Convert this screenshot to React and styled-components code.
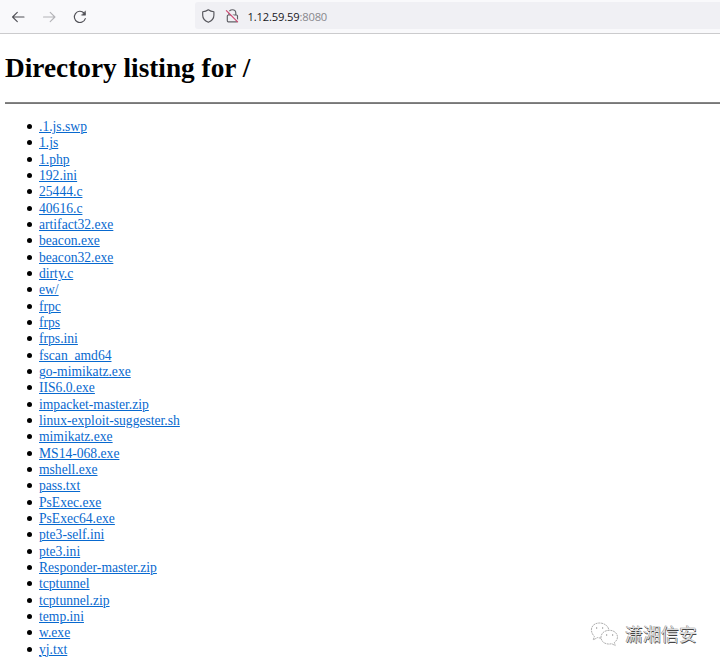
import React from 'react';
import styled, { createGlobalStyle } from 'styled-components';

const GlobalStyle = createGlobalStyle`
  * { box-sizing: border-box; }
  html, body { margin: 0; background: #fff; overflow: hidden; }
`;

const Page = styled.div`
  position: relative;
  width: 720px;
  height: 666px;
  overflow: hidden;
  background: #fff;
`;

const Toolbar = styled.header`
  display: flex;
  height: 34px;
  background: #f9f9fb;
  border-bottom: 1px solid #cbcbcd;
`;

const Navigation = styled.nav`
  display: flex;
  width: 195px;
  height: 33px;
  padding-left: 10px;
  gap: 15px;
  align-items: center;
`;

const NavButton = styled.button`
  display: flex;
  padding: 0;
  border: 0;
  background: none;
  color: ${({ $muted }) => ($muted ? '#b4b4b8' : '#505056')};
`;

const AddressBar = styled.div`
  display: flex;
  flex: 1;
  height: 27px;
  margin-top: 2px;
  padding: 1px 0 0 5px;
  align-items: center;
  border-radius: 3px 0 0 3px;
  background: #f0f0f4;
`;

const AddressIcon = styled.span`
  display: flex;
  width: 24px;
  height: 18px;
`;

const Address = styled.span`
  margin: 2px 0 0 -0.5px;
  color: #17171c;
  font: 11.2px/18px "Open Sans", "Noto Sans", sans-serif;
  letter-spacing: -0.17px;
`;

const Port = styled.span`
  color: #88888d;
`;

const Listing = styled.main`
  padding-left: 5px;
  font-family: "Liberation Serif", "Times New Roman", serif;
`;

const Title = styled.h1`
  margin: 0;
  padding-top: 18px;
  height: 68px;
  color: #000;
  font-size: 27.3px;
  line-height: 32px;
`;

const Divider = styled.hr`
  height: 2px;
  margin: 0;
  border: 0;
  border-top: 1px solid #858585;
  background: #777;
`;

const Files = styled.ul`
  margin: 0;
  padding: 15px 0 0 22px;
  list-style: none;
`;

const FileRow = styled.li`
  display: flex;
  height: 16.34px;
  align-items: center;
`;

const Bullet = styled.span`
  width: 5px;
  height: 5px;
  margin: 0 7px 1px 0;
  border-radius: 50%;
  background: #000;
`;

const FileLink = styled.a`
  color: #0869cf;
  font-size: 13.6px;
  line-height: 16px;
  text-decoration: underline;
  text-decoration-thickness: 1px;
  white-space: nowrap;
`;

const Watermark = styled.div`
  position: absolute;
  left: 590px;
  top: 621px;
  display: flex;
  align-items: center;
  gap: 6px;
`;

const WatermarkText = styled.span`
  margin-top: -2px;
  color: #ddd;
  font: 18px/28px "Noto Sans CJK SC", sans-serif;
  text-shadow: 0.5px 0.5px 0.5px #444, -0.5px -0.3px 0.5px #888;
`;

const files = [
  '.1.js.swp', '1.js', '1.php', '192.ini', '25444.c', '40616.c',
  'artifact32.exe', 'beacon.exe', 'beacon32.exe', 'dirty.c', 'ew/',
  'frpc', 'frps', 'frps.ini', 'fscan_amd64', 'go-mimikatz.exe',
  'IIS6.0.exe', 'impacket-master.zip', 'linux-exploit-suggester.sh',
  'mimikatz.exe', 'MS14-068.exe', 'mshell.exe', 'pass.txt', 'PsExec.exe',
  'PsExec64.exe', 'pte3-self.ini', 'pte3.ini', 'Responder-master.zip',
  'tcptunnel', 'tcptunnel.zip', 'temp.ini', 'w.exe', 'yj.txt',
];

const Stroke = ({ width = 16, height = 16, children }) => (
  <svg width={width} height={height} viewBox={`0 0 ${width} ${height}`} fill="none"
    stroke="currentColor" strokeWidth="1.15" strokeLinecap="round" strokeLinejoin="round">
    {children}
  </svg>
);

const WeChat = () => (
  <svg width="29" height="26" viewBox="0 0 29 26" fill="none" stroke="#999"
    strokeWidth="0.8" strokeDasharray="2 0.7">
    <path d="M11 17.2 7.5 16.6 3.3 18.8l1-3.5C-1.2 9.8 1.4 2 9.5 2c5 0 9 3.2 9.3 7" />
    <path d="M19.5 9.3C14 9.3 11 12.7 11 16.3c0 5 5.3 7.8 10.7 6.4l3.5 1.8-.8-3c6.2-4.7 2.3-12.2-4.9-12.2Z" fill="#fff" />
    <path d="M6 7h1.2M12 7h1.2M16 14h1.2M22 14h1.2" stroke="#777" strokeWidth="1.2" strokeDasharray="none" />
  </svg>
);

export default function App() {
  return (
    <Page>
      <GlobalStyle />
      <Toolbar>
        <Navigation>
          <NavButton aria-label="Back">
            <Stroke><path d="M14 8H2.7M7.3 3.3 2.6 8l4.7 4.7" /></Stroke>
          </NavButton>
          <NavButton aria-label="Forward" $muted>
            <Stroke><path d="M2.5 8h11.3M9.2 3.3 13.9 8l-4.7 4.7" /></Stroke>
          </NavButton>
          <NavButton aria-label="Reload">
            <Stroke>
              <path d="M13.3 9.6A5.6 5.6 0 1 1 12 4l1 1" />
              <path d="M13.5 2.2v4H9.7Z" fill="currentColor" strokeWidth=".5" />
            </Stroke>
          </NavButton>
        </Navigation>
        <AddressBar>
          <AddressIcon>
            <Stroke height={18}>
              <path d="M8.3 2.8c1.7 1.2 3.6 1.8 5.6 2v3.5c0 3.3-2.1 5.6-5.6 7-3.5-1.4-5.6-3.7-5.6-7V4.8c2-.2 3.9-.8 5.6-2Z" stroke="#55555b" />
            </Stroke>
          </AddressIcon>
          <AddressIcon>
            <Stroke height={18}>
              <path d="M5 8V6.1a3.4 3.4 0 0 1 6.8 0V8M4.3 8h8.2q1 0 1 1v4.8q0 1-1 1H4.3q-1 0-1-1V9q0-1 1-1Z" stroke="#606066" />
              <path d="m3.4 3 10.8 11" stroke="#f0f0f4" strokeWidth="1.2" />
              <path d="m2.4 3.6 11.2 11.3" stroke="#d04c75" strokeWidth="1.2" />
            </Stroke>
          </AddressIcon>
          <Address>1.12.59.59<Port>:8080</Port></Address>
        </AddressBar>
      </Toolbar>
      <Listing>
        <Title>Directory listing for /</Title>
        <Divider />
        <Files>
          {files.map((file) => (
            <FileRow key={file}>
              <Bullet />
              <FileLink href={`#${file}`}>{file}</FileLink>
            </FileRow>
          ))}
        </Files>
      </Listing>
      <Watermark>
        <WeChat />
        <WatermarkText>潇湘信安</WatermarkText>
      </Watermark>
    </Page>
  );
}
